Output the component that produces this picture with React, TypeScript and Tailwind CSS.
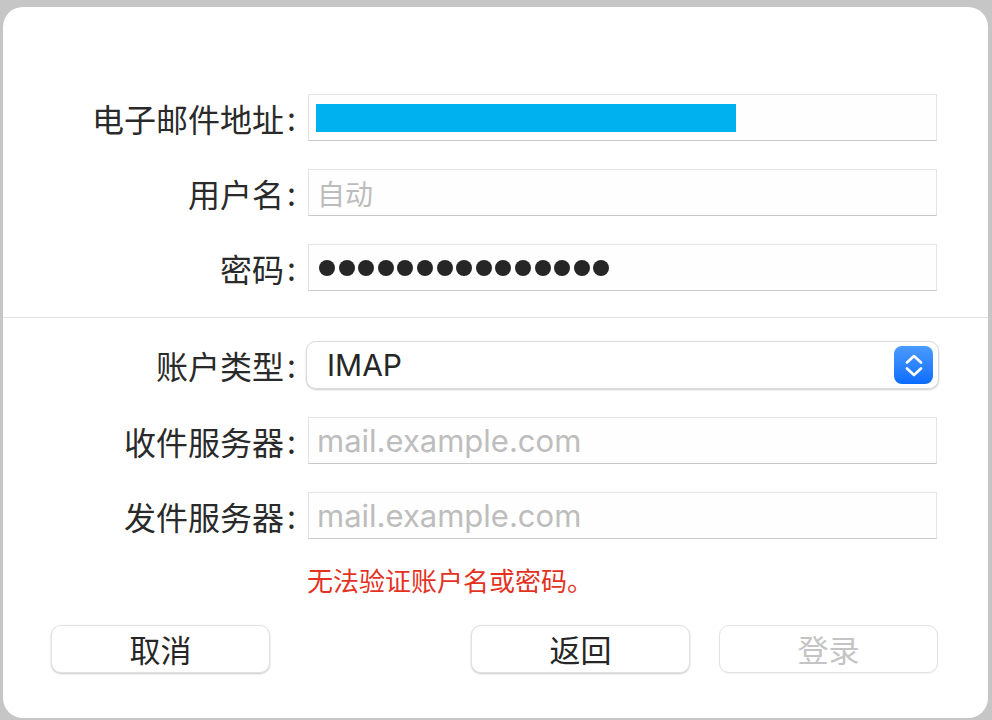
import React from 'react';

const cjk = { fontFamily: '"Noto Sans CJK SC", "Noto Sans", sans-serif' };
const latin = { fontFamily: 'Inter, "Noto Sans CJK SC", sans-serif' };

function Label({ text }: { text: string }) {
	return (
		<div
			className="flex w-[305px] shrink-0 items-center justify-end pr-[12px] text-[32px] leading-none text-[#2a2a2a]"
			style={cjk}
		>
			<span>{text}</span>
			<span className="ml-[3px] pb-[2px]">:</span>
		</div>
	);
}

function Field({ children }: { children?: React.ReactNode }) {
	return (
		<div className="flex h-[47px] w-[629px] items-center border border-[#e4e4e4] border-b-[#c9c9c9] bg-[#fefefe] pl-[8px]">
			{children}
		</div>
	);
}

function Row({ label, children, className = '' }: { label: string; children: React.ReactNode; className?: string }) {
	return (
		<div className={`flex items-center ${className}`}>
			<Label text={label} />
			{children}
		</div>
	);
}

function Button({ text, disabled }: { text: string; disabled?: boolean }) {
	return (
		<div
			className={`flex h-[48px] w-[219px] items-center justify-center rounded-[10px] border border-[#e2e2e2] bg-white pb-[2px] text-[31px] leading-none ${
				disabled
					? 'text-[#c4c4c4] shadow-[0_1px_1px_rgba(0,0,0,0.06)]'
					: 'text-[#262626] shadow-[0_1px_2px_rgba(0,0,0,0.22)]'
			}`}
			style={cjk}
		>
			{text}
		</div>
	);
}

export default function App() {
	return (
		<div className="h-[720px] w-[992px] overflow-hidden bg-[#c6c6c6] pb-[2px] pl-[3px] pr-[4px] pt-[7px]">
			<div className="flex h-[711px] w-[985px] flex-col rounded-[20px] bg-white">
				<div className="flex flex-col gap-[28px] pt-[87px]">
					<Row label="电子邮件地址">
						<Field>
							<div className="ml-[-1px] mt-[1px] h-[28px] w-[420px] bg-[#00b1f0]" />
						</Field>
					</Row>
					<Row label="用户名">
						<Field>
							<span className="text-[28px] leading-none text-[#bcbcbc]" style={cjk}>
								自动
							</span>
						</Field>
					</Row>
					<Row label="密码">
						<Field>
							<div className="ml-[2px] flex gap-[3.6px]">
								{Array.from({ length: 15 }).map((_, i) => (
									<div key={i} className="h-[16px] w-[16px] rounded-full bg-[#262626]" />
								))}
							</div>
						</Field>
					</Row>
				</div>

				<div className="mt-[26px] h-[1px] w-full bg-[#e2e2e2]" />

				<Row label="账户类型" className="mt-[23px]">
					<div className="ml-[-2px] flex h-[48px] w-[633px] items-center justify-between rounded-[10px] border border-[#dcdcdc] bg-white pl-[20px] pr-[5px] shadow-[0_1px_2px_rgba(0,0,0,0.2)]">
						<span className="text-[30px] leading-none text-[#262626]" style={latin}>
							IMAP
						</span>
						<div className="flex h-[38px] w-[39px] flex-col items-center justify-center gap-[3px] rounded-[8px] bg-gradient-to-b from-[#4a9bff] to-[#0a6cfd]">
							<svg width="18" height="10" viewBox="0 0 18 10" fill="none">
								<path d="M2 8.5 L9 2 L16 8.5" stroke="white" strokeWidth="2.6" strokeLinecap="round" strokeLinejoin="round" />
							</svg>
							<svg width="18" height="10" viewBox="0 0 18 10" fill="none">
								<path d="M2 1.5 L9 8 L16 1.5" stroke="white" strokeWidth="2.6" strokeLinecap="round" strokeLinejoin="round" />
							</svg>
						</div>
					</div>
				</Row>

				<div className="mt-[28px] flex flex-col gap-[28px]">
					<Row label="收件服务器">
						<Field>
							<span className="text-[31px] leading-none text-[#bdbdbd]" style={latin}>
								mail.example.com
							</span>
						</Field>
					</Row>
					<Row label="发件服务器">
						<Field>
							<span className="text-[31px] leading-none text-[#bdbdbd]" style={latin}>
								mail.example.com
							</span>
						</Field>
					</Row>
				</div>

				<div className="mt-[28px] pl-[304px] text-[26px] leading-none text-[#e3321f]" style={cjk}>
					无法验证账户名或密码。
				</div>

				<div className="mt-[32px] flex items-center pl-[48px]">
					<Button text="取消" />
					<div className="ml-[201px]">
						<Button text="返回" />
					</div>
					<div className="ml-[29px]">
						<Button text="登录" disabled />
					</div>
				</div>
			</div>
		</div>
	);
}
